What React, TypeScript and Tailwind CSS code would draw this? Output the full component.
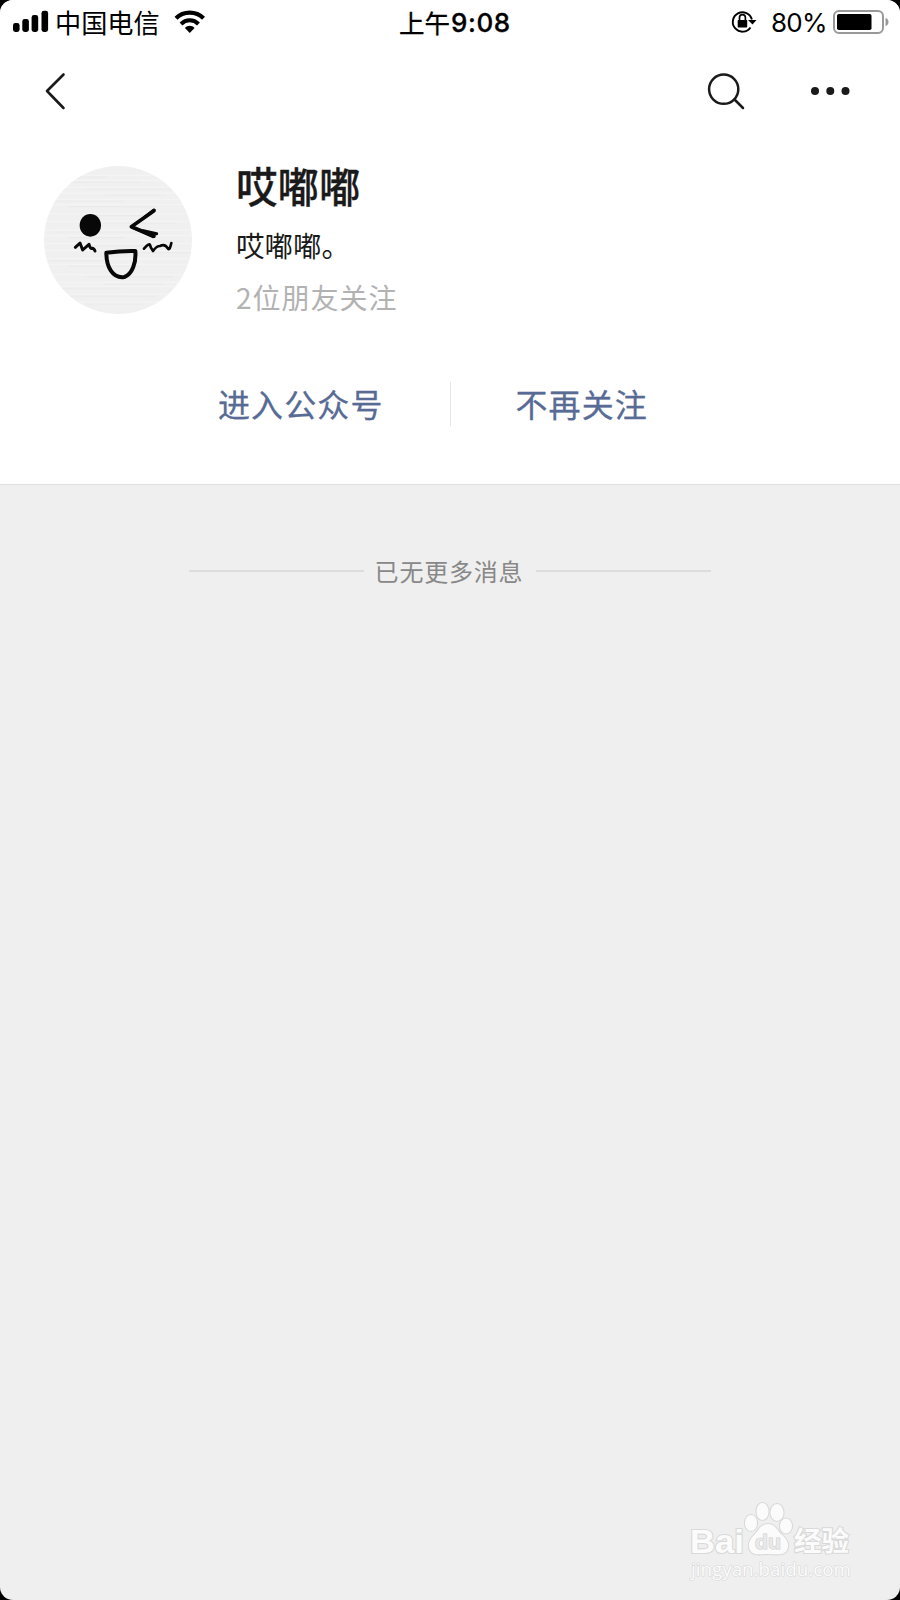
/** OfficialAccountPage — Profile screen of a followed account. */
import type { ReactNode } from 'react'

function StatusBar() {
  return (
    <div className="flex h-[46px] items-center text-black">
      <div className="flex w-[399px] items-center">
        <svg className="-mt-0.5 ml-[13px]" width="36" height="24" viewBox="0 0 36 24">
          <rect x="0" y="13" width="6.600" height="9" rx="2.4" />
          <rect x="9.3" y="9" width="6.600" height="13" rx="2.4" />
          <rect x="18.6" y="5" width="6.600" height="17" rx="2.4" />
          <rect x="28.500" y=".8" width="6.600" height="21.2" rx="2.4" />
        </svg>
        <span className="-mt-0.5 ml-1.5 text-[26.200px] leading-[44px]">中国电信</span>
        <svg className="-mt-0.5 ml-3.5" width="32" height="24" viewBox="0 0 32 24" fill="none" stroke="#000">
          <path d="M2 8.2C9.5 .8 22 .8 29.5 8.2" strokeWidth="4.2" />
          <path d="M7 14C12 9 19.500 9 24.500 14" strokeWidth="4" />
          <path d="M10.900 18C13.500 15 18 15 20.600 18L15.750 23Z" fill="#000" stroke="none" />
        </svg>
      </div>
      <div className="-mt-0.5 flex text-[25.500px] leading-[44px] [-webkit-text-stroke:0.300px_#000]">
        上午
        <span className="ml-px pt-px font-['Inter'] text-[26px] font-medium tracking-[0.600px]">9:08</span>
      </div>
      <div className="ml-auto flex items-center">
        <svg className="-mt-1" width="27" height="24" viewBox="0 0 27 24" fill="none" stroke="#000" strokeWidth="1.9">
          <path d="M19.500 18.500A9.700 9.700 0 1 1 20.900 10.500" />
          <path d="M17 11H25.500L21.500 15.500Z" fill="#000" stroke="none" />
          <rect x="6.700" y="11" width="9.500" height="7.500" rx=".8" fill="#000" stroke="none" />
          <path d="M8.500 11.500V8.500A2.950 2.950 0 0 1 14.400 8.500V11.500" strokeWidth="1.7" />
        </svg>
        <span className="ml-[13px] w-[55px] font-['Inter'] text-[26px] leading-[46px] tracking-[-0.800px]">80%</span>
        <svg className="-mt-0.5 mr-2.5 ml-[7px]" width="57" height="26" viewBox="0 0 57 26">
          <rect x="1" y="2" width="49" height="22" rx="5" fill="none" stroke="#999" strokeWidth="2" />
          <rect x="4" y="5" width="34.500" height="16" rx="1.800" />
          <path d="M52.500 9C56.500 10 56.500 16 52.500 17Z" fill="#999" />
        </svg>
      </div>
    </div>
  )
}

function NavBar() {
  return (
    <div className="flex h-[90px] items-center text-[#1a1a1a]">
      <svg className="ml-11" width="24" height="40" viewBox="0 0 24 40" fill="none" stroke="currentColor" strokeWidth="2.6" strokeLinecap="round" strokeLinejoin="round">
        <path d="M19.500 3.500L3 20L19.500 37" />
      </svg>
      <svg className="ml-auto" width="40" height="40" viewBox="0 0 40 40" fill="none" stroke="currentColor" strokeWidth="2.5" strokeLinecap="round">
        <circle cx="17.700" cy="18.200" r="14.600" />
        <path d="M28.500 28.500L37 37" />
      </svg>
      <svg className="mr-[50px] ml-[64px]" width="40" height="10" viewBox="0 0 40 10" fill="currentColor">
        <circle cx="5" cy="5" r="4" />
        <circle cx="20.300" cy="5" r="4" />
        <circle cx="35.500" cy="5" r="4" />
      </svg>
    </div>
  )
}

const scratches = [76, 91, 112, 129, 148, 164, 191, 214, 240, 257, 281, 302, 326, 343, 374, 397, 409, 433, 456]

function Avatar() {
  return (
    <svg className="size-[148px] rounded-full" viewBox="42 48 444 444" fill="none" stroke="#080808" strokeLinecap="round" strokeLinejoin="round">
      <rect x="42" y="48" width="444" height="444" fill="#f0f0f0" stroke="none" />
      {scratches.map((y, i) => (
        <g key={y}>
          <path d={`M42 ${y}H486`} stroke="#f5f5f5" strokeWidth="3" />
          <path d={`M${60 + (i % 4) * 55} ${y + 6}h${170 + (i % 3) * 45}`} stroke="#e8e8e8" strokeWidth="2" />
        </g>
      ))}
      <ellipse cx="181" cy="226" rx="32" ry="34" fill="#080808" stroke="none" />
      <path d="M372 182L304 230L372 258" strokeWidth="11" />
      <path d="M372 180L345 201M306 232L369 260M340 242L380 251" strokeWidth="9" />
      <path d="M136 292L150 279L158 300L177 283Q181 297 185 295Q191 293 195 303" strokeWidth="9" />
      <path d="M342 296Q359 277 360 285Q361 292 369 303Q379 288 390 288Q405 280 414 296Q419 302 424 279" strokeWidth="8" />
      <path d="M229 308Q274 302 316 303C319 339 306 373 283 381C247 386 229 350 229 308Z" strokeWidth="12" />
    </svg>
  )
}

function ActionButton({ children }: { children: ReactNode }) {
  return (
    <button className="text-[32px] leading-[46px] tracking-[1.100px] text-[#576b95] [-webkit-text-stroke:0.300px_#576b95]">
      {children}
    </button>
  )
}

function Watermark() {
  return (
    <svg className="absolute right-[41px] bottom-[14px]" width="170" height="86" viewBox="0 0 170 86" fill="#fbfbfb" stroke="#d9d9d9" strokeWidth="2.2" paintOrder="stroke">
      <text x="1" y="53" fontFamily="Liberation Sans" fontWeight="700" fontSize="34" textLength="54" lengthAdjust="spacingAndGlyphs">Bai</text>
      <ellipse cx="62" cy="23" rx="6" ry="8" />
      <ellipse cx="73.500" cy="11.500" rx="6" ry="8.500" />
      <ellipse cx="88" cy="12.500" rx="6.500" ry="8.500" />
      <ellipse cx="97" cy="26" rx="6" ry="7.500" />
      <path d="M79 24C86 24 88 30 92 34C98 39 101 44 98 50C95 56 87 54 79 54C71 54 64 56 61 50C58 44 61 39 66 34C70 30 72 24 79 24Z" />
      <text x="66" y="49" fontFamily="Liberation Sans" fontWeight="700" fontSize="21" fill="#e9e9e9" stroke="#cfcfcf" strokeWidth="1.200" textLength="26" lengthAdjust="spacingAndGlyphs">du</text>
      <text x="105" y="51" fontFamily="Noto Sans CJK SC" fontWeight="700" fontSize="27" textLength="55" lengthAdjust="spacingAndGlyphs">经验</text>
      <text x="2" y="76" fontFamily="Open Sans" fontSize="17.500" strokeWidth="1.200" textLength="160" lengthAdjust="spacingAndGlyphs">jingyan.baidu.com</text>
    </svg>
  )
}

export default function App() {
  return (
    <div className="h-[1600px] w-[900px] overflow-hidden bg-black">
      <div className="relative h-full overflow-hidden rounded-[13px] bg-[#efefef] font-['Noto_Sans_CJK_SC',sans-serif]">
        <header className="h-[485px] border-b border-[#e0e0e0] bg-white">
          <StatusBar />
          <NavBar />
          <div className="flex pt-[30px] pl-11">
            <Avatar />
            <div className="ml-11 flex flex-col">
              <h1 className="-mt-[5px] text-[41.500px] leading-[48px] font-medium text-[#1a1a1a] [-webkit-text-stroke:0.300px_#1a1a1a]">哎嘟嘟</h1>
              <p className="mt-3 text-[28.500px] leading-[48px] text-[#1a1a1a]">哎嘟嘟。</p>
              <p className="mt-1 text-[28px] leading-[48px] tracking-[1px] text-[#b2b2b2]">2位朋友关注</p>
            </div>
          </div>
          <div className="mt-[59px] flex items-center pl-[218px]">
            <ActionButton>进入公众号</ActionButton>
            <div className="mt-0.5 mr-[65px] ml-[66px] h-11 w-px bg-[#e5e5e5]" />
            <ActionButton>不再关注</ActionButton>
          </div>
        </header>

        <div className="mt-[68px] flex items-center justify-center text-[24px] leading-[36px] text-[#888]">
          <div className="h-0.5 w-[175px] bg-[#dcdcdc]" />
          <span className="mr-[13px] ml-[11px] tracking-[0.800px]">已无更多消息</span>
          <div className="h-0.5 w-[175px] bg-[#dcdcdc]" />
        </div>

        <Watermark />
      </div>
    </div>
  )
}
